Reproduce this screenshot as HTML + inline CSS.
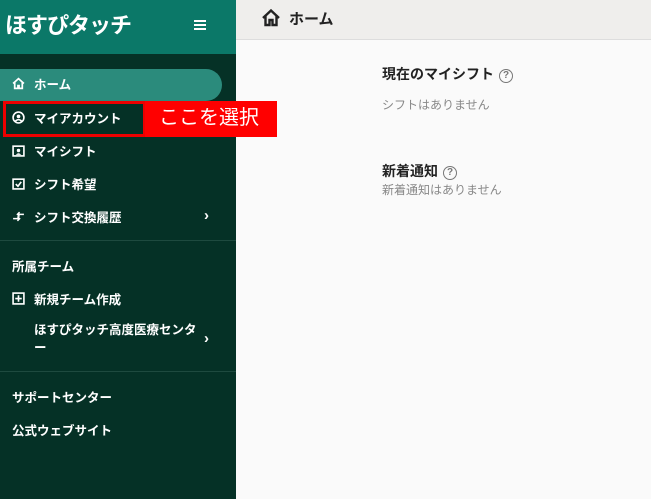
<!DOCTYPE html>
<html><head><meta charset="utf-8"><style>
*{margin:0;padding:0;box-sizing:border-box}
body{width:651px;height:499px;overflow:hidden;font-family:"Liberation Sans","Noto Sans CJK JP",sans-serif;background:#fafafa;position:relative}
.side{position:absolute;left:0;top:0;width:236px;height:499px;background:#053126}
.top{position:absolute;left:0;top:0;width:236px;height:54px;background:#0b7868}
.logo{position:absolute;left:5px;top:8px;font-size:22px;font-weight:bold;color:#fff;letter-spacing:-1px}
.ham{position:absolute;left:194px;top:20px;width:12px}
.ham i{display:block;height:2px;background:#fff;margin-bottom:2px}
.it{position:absolute;left:12px;color:#fff;font-size:12.5px;font-weight:bold;display:flex;align-items:center}
.it svg{margin-right:9px}
.pill{position:absolute;left:0;top:69px;width:222px;height:32px;background:#2b8b7c;border-radius:0 16px 16px 0}
.hr{position:absolute;left:0;width:236px;height:1px;background:#1e4a3f}
.main-h{position:absolute;left:236px;top:0;width:415px;height:40px;background:#efeeec;border-bottom:1px solid #ddd}
.gt{position:absolute;color:#222;font-size:14px;font-weight:bold}
.gs{position:absolute;color:#888;font-size:12px}
.q{display:inline-block;width:14px;height:14px;border:1.5px solid #777;border-radius:50%;font-size:10px;text-align:center;line-height:11px;color:#777;margin-left:5px;vertical-align:1px}
</style></head><body>
<div class="side"></div>
<div class="top"><div class="logo">ほすぴタッチ</div><div class="ham"><i></i><i></i><i></i></div></div>
<div class="pill"></div>
<div class="it" style="top:74px"><svg width="13" height="13" viewBox="0 0 12 12"><path d="M1 6L6 1.5 11 6M2.5 5v5.5h3V8h1v2.5h3V5" fill="none" stroke="#fff" stroke-width="1.6"/></svg>ホーム</div>
<div style="position:absolute;left:3px;top:101px;width:143px;height:36px;border:3px solid #e00"></div>
<div style="position:absolute;left:145px;top:101px;width:132px;height:36px;background:#f00;color:#fff;font-size:20px;line-height:34px;padding-left:14px">ここを選択</div>
<div class="it" style="top:108px"><svg width="13" height="13" viewBox="0 0 12 12"><circle cx="6" cy="6" r="5" fill="none" stroke="#fff" stroke-width="1.5"/><circle cx="6" cy="5" r="1.7" fill="#fff"/><path d="M3 9.5q3-3 6 0" stroke="#fff" fill="none" stroke-width="1.4"/></svg>マイアカウント</div>
<div class="it" style="top:141px"><svg width="13" height="13" viewBox="0 0 12 12"><rect x="1" y="2" width="10" height="9" fill="none" stroke="#fff" stroke-width="1.5"/><circle cx="6" cy="6" r="1.6" fill="#fff"/><path d="M3.5 10q2.5-3 5 0" fill="#fff"/></svg>マイシフト</div>
<div class="it" style="top:174px"><svg width="13" height="13" viewBox="0 0 12 12"><rect x="1" y="2" width="10" height="9" fill="none" stroke="#fff" stroke-width="1.5"/><path d="M3.5 6.5l2 2 3-4" fill="none" stroke="#fff" stroke-width="1.5"/></svg>シフト希望</div>
<div class="it" style="top:207px"><svg width="13" height="13" viewBox="0 0 12 12"><path d="M1 8h6M5 6l2 2-2 2M11 4H5M7 2L5 4l2 2" fill="none" stroke="#fff" stroke-width="1.4"/></svg>シフト交換履歴</div>
<div class="it" style="top:207px;left:204px;font-size:15px">›</div>
<div class="hr" style="top:240px"></div>
<div class="it" style="top:256px">所属チーム</div>
<div class="it" style="top:289px"><svg width="13" height="13" viewBox="0 0 12 12"><rect x="1" y="1" width="10" height="10" fill="none" stroke="#fff" stroke-width="1.5"/><path d="M6 3v6M3 6h6" stroke="#fff" stroke-width="1.5"/></svg>新規チーム作成</div>
<div class="it" style="top:321px;left:34px;width:165px;line-height:18px;display:block">ほすぴタッチ高度医療センター</div>
<div class="it" style="top:330px;left:204px;font-size:15px">›</div>
<div class="hr" style="top:371px"></div>
<div class="it" style="top:387px">サポートセンター</div>
<div class="it" style="top:420px">公式ウェブサイト</div>
<div class="main-h"><svg style="position:absolute;left:25px;top:8px" width="20" height="20" viewBox="0 0 20 20"><path d="M2 10L10 2.5 18 10M4.5 8v9h4v-5h3v5h4V8" fill="none" stroke="#222" stroke-width="2.4"/></svg><span style="position:absolute;left:53px;top:8px;font-size:15px;font-weight:bold;color:#222">ホーム</span></div>
<div class="gt" style="left:382px;top:64px">現在のマイシフト<span class="q">?</span></div>
<div class="gs" style="left:382px;top:96px">シフトはありません</div>
<div class="gt" style="left:382px;top:161px">新着通知<span class="q">?</span></div>
<div class="gs" style="left:382px;top:181px">新着通知はありません</div>
</body></html>
